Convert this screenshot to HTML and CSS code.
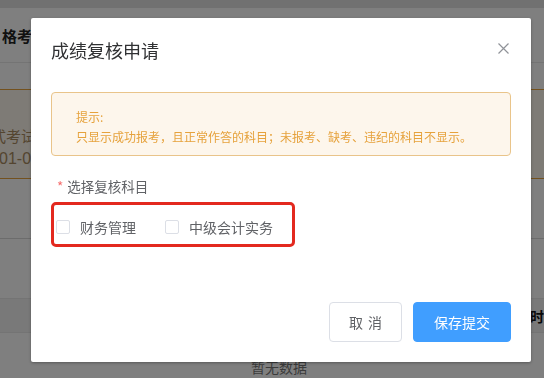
FILE: index.html
```html
<!DOCTYPE html>
<html lang="zh-CN">
<head>
<meta charset="utf-8">
<title>成绩复核申请</title>
<link rel="stylesheet" href="styles.css">
</head>
<body>
<div class="page">
  <div class="topbar"></div>
  <div class="heading">格考试成绩复核</div>
  <div class="notice">
    <div class="notice-line">式考试时间及说明</div>
    <div class="notice-line notice-date">01-01</div>
  </div>
  <div class="section"></div>
  <div class="table-head"><span class="th-right">交时间</span></div>
  <div class="empty">暂无数据</div>
</div>

<div class="mask"></div>

<div class="dialog">
  <div class="dialog-header">
    <span class="dialog-title">成绩复核申请</span>
    <span class="dialog-close">
      <svg width="11" height="11" viewBox="0 0 11 11"><path d="M0.5 0.5 L10.5 10.5 M10.5 0.5 L0.5 10.5" stroke="#909399" stroke-width="1.2" fill="none"/></svg>
    </span>
  </div>
  <div class="dialog-body">
    <div class="alert">
      <div class="alert-line">提示:</div>
      <div class="alert-line">只显示成功报考，且正常作答的科目；未报考、缺考、违纪的科目不显示。</div>
    </div>
    <div class="form-label"><span class="req">*</span>选择复核科目</div>
    <div class="mark-box">
      <label class="check"><span class="check-box"></span><span class="check-text">财务管理</span></label>
      <label class="check"><span class="check-box"></span><span class="check-text">中级会计实务</span></label>
    </div>
  </div>
  <div class="dialog-footer">
    <button class="btn btn-default"><span class="sp">取</span>消</button>
    <button class="btn btn-primary">保存提交</button>
  </div>
</div>
</body>
</html>
```

FILE: styles.css
```css
* { box-sizing: border-box; }
html, body {
  margin: 0;
  padding: 0;
  width: 544px;
  height: 378px;
  overflow: hidden;
  font-family: "Noto Sans CJK SC", "Noto Sans", "Liberation Sans", sans-serif;
  background: #ffffff;
}

/* background page */
.page {
  width: 544px;
  height: 378px;
  display: flex;
  flex-direction: column;
}
.topbar {
  height: 8px;
  background: #e2e2e2;
}
.heading {
  height: 55px;
  padding-left: 2px;
  display: flex;
  align-items: center;
  font-size: 15px;
  font-weight: bold;
  color: #222;
  border-bottom: 1px solid #e8e8e8;
  white-space: nowrap;
}
.notice {
  margin-top: 26px;
  height: 90px;
  background: #fdf6ec;
  border-top: 1px solid #e6a23c;
  border-bottom: 1px solid #e6a23c;
  padding-top: 34px;
  text-indent: -9px;
  white-space: nowrap;
}
.notice-line {
  font-size: 15px;
  line-height: 23px;
  color: #a88a60;
}
.notice-date {
  text-indent: -1px;
  font-size: 16px;
  font-family: "Liberation Sans", sans-serif;
}
.section {
  height: 60px;
  border-bottom: 1px solid #d8d8d8;
}
.table-head {
  margin-top: 59px;
  height: 35px;
  background: #f2f2f2;
  border-top: 1px solid #e8e8e8;
  border-bottom: 1px solid #e8e8e8;
  display: flex;
  align-items: center;
  justify-content: flex-end;
  font-size: 14px;
  font-weight: bold;
  color: #111;
  white-space: nowrap;
  overflow: hidden;
}
.th-right {
  margin-right: -14px;
}
.empty {
  text-align: center;
  font-size: 14px;
  color: #777;
  padding-top: 24px;
  padding-left: 14px;
}

/* overlay */
.mask {
  position: fixed;
  inset: 0;
  background: rgba(0, 0, 0, 0.5);
}

/* dialog */
.dialog {
  position: absolute;
  left: 31px;
  top: 18px;
  width: 500px;
  height: 344px;
  background: #ffffff;
  border-radius: 2px;
  box-shadow: 0 1px 3px rgba(0,0,0,0.3);
  display: flex;
  flex-direction: column;
}
.dialog-header {
  padding: 20px 22px 10px 20px;
  display: flex;
  align-items: center;
  justify-content: space-between;
}
.dialog-title {
  font-size: 18px;
  line-height: 24px;
  color: #303133;
}
.dialog-close {
  display: flex;
  width: 11px;
  height: 11px;
  margin-top: -3px;
}
.dialog-body {
  padding: 20px 20px 0 20px;
}
.alert {
  border: 1px solid #e9c48a;
  background: #fdf6ec;
  border-radius: 4px;
  padding: 14px 24px 8px 24px;
}
.alert-line {
  font-size: 12px;
  line-height: 20px;
  color: #e6a23c;
  white-space: nowrap;
}
.form-label {
  margin-top: 20px;
  padding-left: 6px;
  font-size: 13.5px;
  line-height: 20px;
  color: #606266;
}
.req {
  color: #f56c6c;
  margin-right: 4px;
}
.mark-box {
  margin-top: 6px;
  width: 244px;
  height: 45px;
  border: 3px solid #e3291f;
  border-radius: 5px;
  padding: 5px 0 0 2px;
  display: flex;
  align-items: center;
  gap: 29px;
}
.check {
  display: flex;
  align-items: center;
  gap: 10px;
}
.check-box {
  width: 14px;
  height: 14px;
  border: 1px solid #dcdfe6;
  border-radius: 2px;
  background: #fff;
}
.check-text {
  font-size: 14px;
  line-height: 20px;
  color: #606266;
}
.dialog-footer {
  margin-top: auto;
  padding: 0 20px 20px 20px;
  display: flex;
  justify-content: flex-end;
  gap: 11px;
}
.btn {
  height: 40px;
  border-radius: 4px;
  font-family: inherit;
  font-size: 14px;
  cursor: pointer;
}
.btn-default {
  width: 73px;
  background: #fff;
  border: 1px solid #dcdfe6;
  color: #606266;
}
.sp {
  margin-right: 5px;
}
.btn-primary {
  width: 98px;
  background: #409eff;
  border: 1px solid #409eff;
  color: #fff;
}
```
